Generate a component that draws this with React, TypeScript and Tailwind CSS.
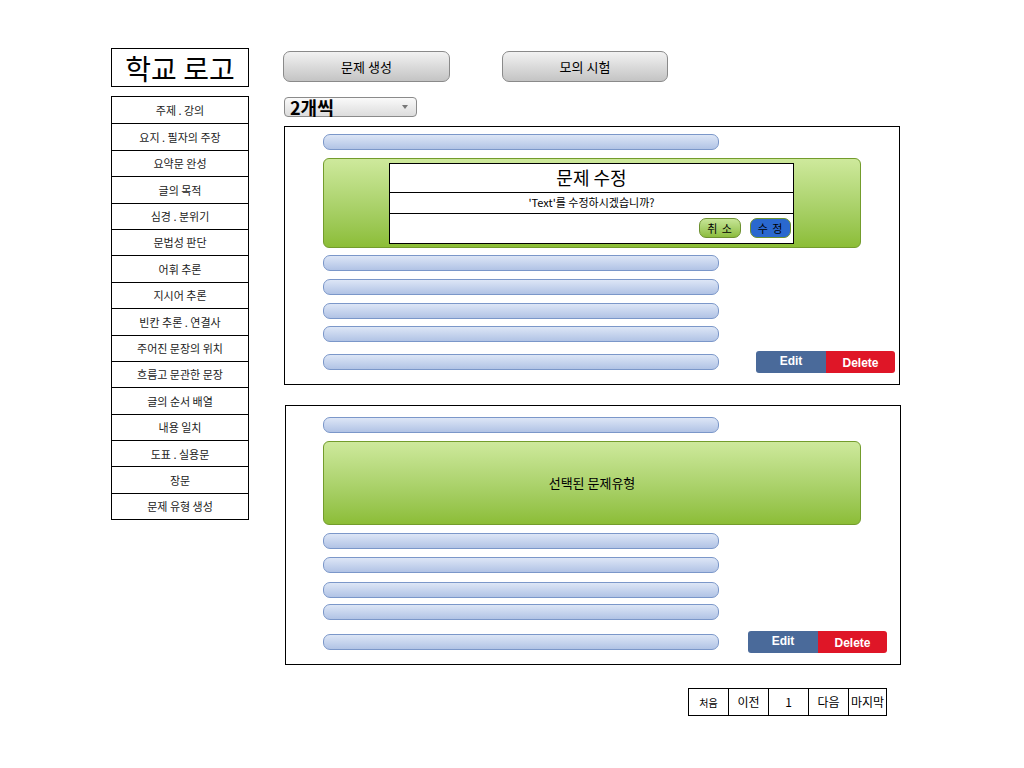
import React from 'react'

const menu = [
  '주제 . 강의',
  '요지 . 필자의 주장',
  '요약문 완성',
  '글의 목적',
  '심경 . 분위기',
  '문법성 판단',
  '어휘 추론',
  '지시어 추론',
  '빈칸 추론 . 연결사',
  '주어진 문장의 위치',
  '흐름고 문관한 문장',
  '글의 순서 배열',
  '내용 일치',
  '도표 . 실용문',
  '장문',
  '문제 유형 생성',
]

const font = { fontFamily: '"Noto Sans CJK KR", "Noto Sans", sans-serif' }

function Bar({ className = '' }: { className?: string }) {
  return (
    <div
      className={`h-[16px] w-[396px] shrink-0 rounded-[7px] border border-[#7b97c9] bg-gradient-to-b from-[#dde6f6] to-[#b1c3e5] ${className}`}
    />
  )
}

function ActionButtons() {
  return (
    <div className="flex h-[22px] font-['Liberation_Sans',sans-serif] text-[12px] font-bold text-white">
      <button className="w-[70px] rounded-l-[3px] bg-[#4a6a9a] pb-[2px]">Edit</button>
      <button className="w-[69px] rounded-r-[3px] bg-[#df1627] pt-[2px]">Delete</button>
    </div>
  )
}

function Panel({ variant }: { variant: 'edit' | 'plain' }) {
  const first = variant === 'edit'
  return (
    <div
      className={`flex flex-col border border-black ${
        first ? 'h-[259px] w-[616px] pl-[38px] pt-[7px]' : 'ml-[1px] h-[260px] w-[616px] pl-[37px] pt-[11px]'
      }`}
    >
      <Bar />
      {first ? (
        <div className="mt-[8px] flex h-[90px] w-[538px] items-center rounded-[6px] border border-[#739c2c] bg-gradient-to-b from-[#cee99c] to-[#8cbd36] pl-[65px]">
          <div className="flex h-[81px] w-[405px] flex-col border border-black bg-white">
            <div className="flex h-[29px] items-center justify-center border-b border-black text-[18px] text-black">
              문제 수정
            </div>
            <div className="flex h-[21px] items-center justify-center border-b border-black text-[11px] text-black">
              'Text'를 수정하시겠습니까?
            </div>
            <div className="flex flex-1 items-center justify-end gap-[9px] pr-[2px]">
              <button className="h-[20px] w-[42px] rounded-[7px] border border-[#6d9130] bg-gradient-to-b from-[#c7e596] to-[#8dbd3d] text-[11px] tracking-[1px] text-black">
                취 소
              </button>
              <button className="h-[20px] w-[41px] rounded-[7px] border border-[#6d9130] bg-[#2a68cf] text-[11px] tracking-[1px] text-black">
                수 정
              </button>
            </div>
          </div>
        </div>
      ) : (
        <div className="mt-[8px] flex h-[84px] w-[538px] items-center justify-center rounded-[6px] border border-[#739c2c] bg-gradient-to-b from-[#cee99c] to-[#8cbd36] text-[13px] text-black">
          선택된 문제유형
        </div>
      )}
      {first ? (
        <>
          <Bar className="mt-[7px]" />
          <Bar className="mt-[8px]" />
          <Bar className="mt-[8px]" />
          <Bar className="mt-[7px]" />
          <div className="mt-[9px] flex items-center">
            <Bar />
            <div className="ml-[37px]">
              <ActionButtons />
            </div>
          </div>
        </>
      ) : (
        <>
          <Bar className="mt-[8px]" />
          <Bar className="mt-[8px]" />
          <Bar className="mt-[9px]" />
          <Bar className="mt-[6px]" />
          <div className="mt-[11px] flex items-center">
            <Bar />
            <div className="ml-[29px]">
              <ActionButtons />
            </div>
          </div>
        </>
      )}
    </div>
  )
}

export default function App() {
  return (
    <div className="min-h-[768px] w-[1024px] bg-white text-black" style={font}>
      <div className="flex pl-[111px] pt-[48px]">
        {/* sidebar */}
        <div className="flex w-[138px] flex-col">
          <div className="flex h-[39px] items-center justify-center border border-black text-[28px] leading-none">
            학교 로고
          </div>
          <div className="mt-[9px] flex flex-col border border-black">
            {menu.map((item, i) => (
              <div
                key={item}
                className={`flex h-[26.4px] items-center justify-center text-[11px] text-[#222] ${
                  i > 0 ? 'border-t border-black' : ''
                }`}
              >
                {item}
              </div>
            ))}
          </div>
        </div>

        {/* main */}
        <div className="ml-[35px] flex flex-col">
          <div className="-ml-[1px] mt-[3px] flex gap-[52px]">
            <button className="h-[31px] w-[167px] rounded-[7px] border border-[#8a8a8a] bg-gradient-to-b from-[#f2f2f2] to-[#c4c4c4] text-[13px] text-black">
              문제 생성
            </button>
            <button className="h-[31px] w-[166px] rounded-[7px] border border-[#8a8a8a] bg-gradient-to-b from-[#f2f2f2] to-[#c4c4c4] text-[13px] text-black">
              모의 시험
            </button>
          </div>

          <div className="mt-[15px] flex h-[20px] w-[133px] items-center justify-between rounded-[4px] border border-[#8a8a8a] bg-gradient-to-b from-[#fafafa] to-[#dcdcdc] pl-[5px] pr-[8px]">
            <span className="text-[18px] font-bold leading-none">2개씩</span>
            <span className="h-0 w-0 border-x-[3px] border-t-[4px] border-x-transparent border-t-[#777]" />
          </div>

          <div className="mt-[9px]">
            <Panel variant="edit" />
          </div>
          <div className="mt-[20px]">
            <Panel variant="plain" />
          </div>

          <div className="ml-[404px] mt-[23px] flex h-[28px] w-[199px] border border-black text-[12px]">
            <div className="flex w-[39px] items-center justify-center text-[10px]">처음</div>
            <div className="flex w-[40px] items-center justify-center border-l border-black">이전</div>
            <div className="flex w-[40px] items-center justify-center border-l border-black">1</div>
            <div className="flex w-[40px] items-center justify-center border-l border-black">다음</div>
            <div className="flex flex-1 items-center justify-center border-l border-black">마지막</div>
          </div>
        </div>
      </div>
    </div>
  )
}
